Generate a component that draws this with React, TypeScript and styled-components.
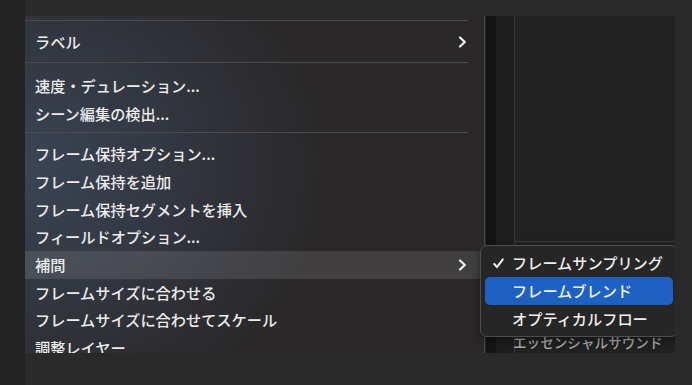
import React from "react";
import styled, { createGlobalStyle } from "styled-components";

const Global = createGlobalStyle`
  html, body { margin: 0; padding: 0; background: #292929; }
  body { font-family: "Noto Sans CJK JP", "Noto Sans", sans-serif; }
  * { box-sizing: border-box; }
`;

const Page = styled.div`
  width: 692px;
  height: 385px;
  padding: 16px 0 0 25px;
  background: linear-gradient(90deg, #232323 0, #232323 25px, #2a2a2a 25px);
`;

const Frame = styled.div`
  position: relative;
  width: 650px;
  height: 337px;
  overflow: hidden;
  display: flex;
  background: #202020;
`;

const Menu = styled.div`
  width: 459px;
  flex: none;
  display: flex;
  flex-direction: column;
  background:
    radial-gradient(ellipse 300px 260px at 0% 45%, rgba(72, 92, 122, 0.55), rgba(72, 92, 122, 0) 100%),
    #2a2829;
`;

const Separator = styled.div<{ $top: number; $bottom: number }>`
  flex: none;
  height: 1px;
  margin: ${(p) => p.$top}px 16px ${(p) => p.$bottom}px 0;
  background: #4c4b4e;
`;

const Row = styled.div<{ $active?: boolean }>`
  flex: none;
  height: 27.7px;
  display: flex;
  align-items: center;
  justify-content: space-between;
  padding: 0 17px 0 10px;
  color: #ececec;
  font-size: 15.2px;
  font-weight: 500;
  line-height: 1;
  white-space: nowrap;
  background: ${(p) => (p.$active ? "rgba(255,255,255,0.11)" : "transparent")};
`;

const Chevron = () => (
  <svg width="9" height="12" viewBox="0 0 9 12" fill="none">
    <path d="M2 1.5 L6.8 6 L2 10.5" stroke="#f2f2f2" strokeWidth="2.2" strokeLinecap="round" strokeLinejoin="round" />
  </svg>
);

const Side = styled.div`
  flex: 1;
  display: flex;
`;

const Stripe = styled.div<{ $w: number; $c: string }>`
  flex: none;
  width: ${(p) => p.$w}px;
  background: ${(p) => p.$c};
`;

const Textured = styled.div`
  flex: none;
  width: 18px;
  background:
    repeating-linear-gradient(45deg, rgba(255,255,255,0.012) 0 1px, transparent 1px 3px),
    #1d1d1d;
`;

const SideContent = styled.div`
  flex: 1;
  display: flex;
  flex-direction: column;
  background: #212121;
`;

const SideTop = styled.div`
  height: 226px;
  flex: none;
  border-bottom: 1px solid #3a3a3a;
`;

const SideLabel = styled.div`
  margin-top: 94px;
  margin-left: -2px;
  color: #a6a6a6;
  font-size: 13.6px;
  font-weight: 500;
  line-height: 1;
  white-space: nowrap;
`;

const Submenu = styled.div`
  position: absolute;
  left: 455px;
  top: 229px;
  width: 198px;
  padding: 3px 4px;
  background: #262626;
  border: 1px solid #4e4e4e;
  border-radius: 7px;
  box-shadow: 0 3px 10px rgba(0, 0, 0, 0.4);
  display: flex;
  flex-direction: column;
`;

const SubItem = styled.div<{ $active?: boolean }>`
  height: 28px;
  display: flex;
  align-items: center;
  padding-left: 27px;
  position: relative;
  border-radius: 5px;
  color: #eeeeee;
  font-size: 15.2px;
  font-weight: 500;
  line-height: 1;
  white-space: nowrap;
  background: ${(p) => (p.$active ? "#1d62c3" : "transparent")};
`;

const Check = styled.svg`
  position: absolute;
  left: 8px;
  top: 9px;
`;

const CheckMark = () => (
  <Check width="11" height="11" viewBox="0 0 11 11" fill="none">
    <path d="M1.3 6 L4 9.2 L9.8 1.3" stroke="#f0f0f0" strokeWidth="2" strokeLinecap="round" strokeLinejoin="round" />
  </Check>
);

export default function App() {
  return (
    <>
      <Global />
      <Page>
        <Frame>
          <Menu>
            <Separator $top={4} $bottom={7} />
            <Row>
              <span>ラベル</span>
              <Chevron />
            </Row>
            <Separator $top={6} $bottom={9} />
            <Row>速度・デュレーション...</Row>
            <Row>シーン編集の検出...</Row>
            <Separator $top={5} $bottom={7} />
            <Row>フレーム保持オプション...</Row>
            <Row>フレーム保持を追加</Row>
            <Row>フレーム保持セグメントを挿入</Row>
            <Row>フィールドオプション...</Row>
            <Row $active>
              <span>補間</span>
              <Chevron />
            </Row>
            <Row>フレームサイズに合わせる</Row>
            <Row>フレームサイズに合わせてスケール</Row>
            <Row>調整レイヤー</Row>
          </Menu>
          <Side>
            <Stripe $w={1} $c="#4a4a4a" />
            <Stripe $w={1} $c="#262626" />
            <Stripe $w={10} $c="#141414" />
            <Textured />
            <Stripe $w={1} $c="#363636" />
            <SideContent>
              <SideTop />
              <SideLabel>エッセンシャルサウンド</SideLabel>
            </SideContent>
          </Side>
          <Submenu>
            <SubItem>
              <CheckMark />
              フレームサンプリング
            </SubItem>
            <SubItem $active>フレームブレンド</SubItem>
            <SubItem>オプティカルフロー</SubItem>
          </Submenu>
        </Frame>
      </Page>
    </>
  );
}
